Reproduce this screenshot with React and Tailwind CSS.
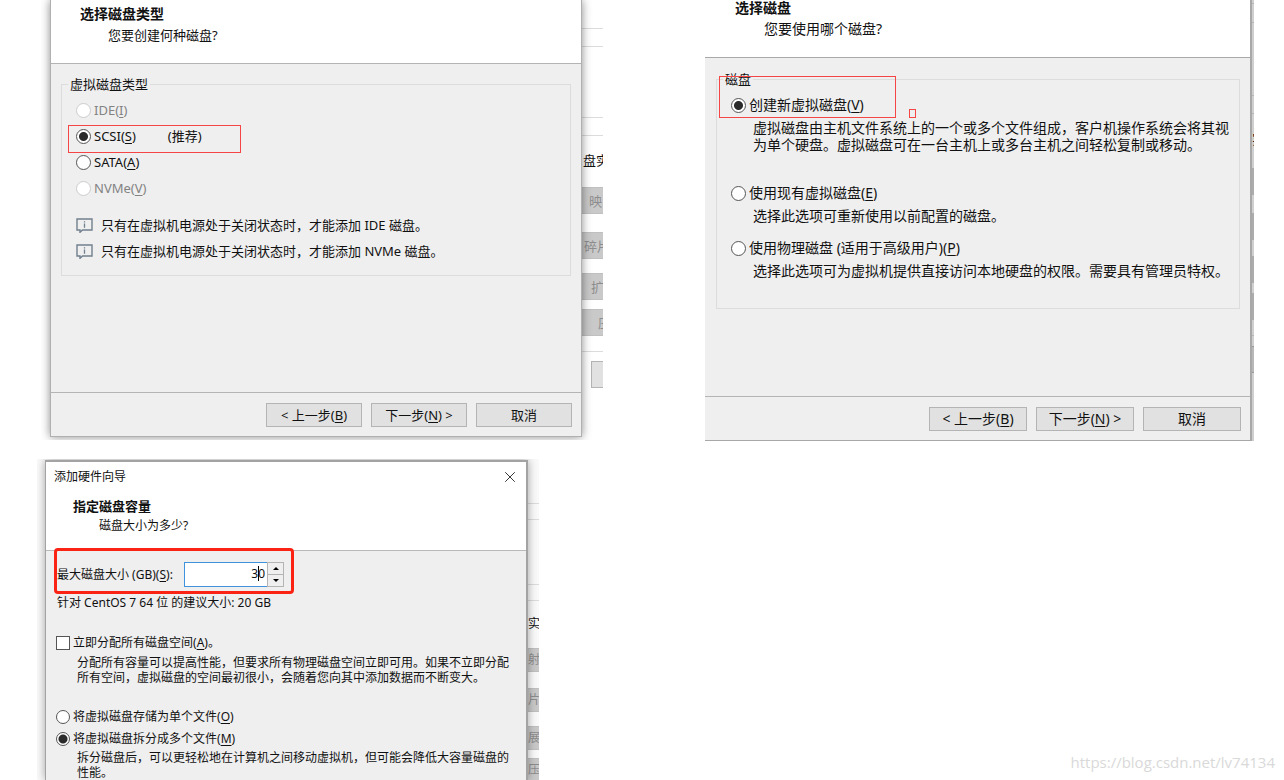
import React, { useState } from "react";
import { X } from "lucide-react";

const radioClass =
  "appearance-none shrink-0 rounded-full border border-[#555] bg-white checked:bg-[radial-gradient(circle,#2b2b2b_4px,#fff_5px)] disabled:border-[#ccc]";

const buttonClass = "h-6 border border-[#b4b4b4] bg-[#e1e1e1] whitespace-nowrap flex items-center justify-center";

const Key = ({ children }) => (
  <>
    (<u className="underline-offset-2">{children}</u>)
  </>
);

const Radio = ({ name, checked, onChange, disabled, size = "h-[26px] pl-[14px]", dot = "size-[15px]", children }) => (
  <label className={`flex items-center gap-[3px] whitespace-nowrap ${size} ${disabled ? "text-[#838383]" : ""}`}>
    <input type="radio" name={name} checked={checked} onChange={onChange} disabled={disabled} className={`${radioClass} ${dot}`} />
    <span>{children}</span>
  </label>
);

const InfoNote = ({ children }) => (
  <p className="flex items-center gap-2 h-[26px] pl-[14px] whitespace-nowrap">
    <svg viewBox="0 0 17 15" className="w-[17px] h-[15px] shrink-0" fill="none" stroke="#71808e">
      <path d="M1 1h15v11H6.500L4 14.300V12H1z" strokeWidth="1.400" />
      <path d="M8.500 3.200v1.400M8.500 5.600v4.200" strokeWidth="1.300" />
    </svg>
    <span>{children}</span>
  </p>
);

const WizardFooter = ({ width }) => (
  <footer className="flex justify-end gap-[9px] border-t border-[#b4b4b4] pt-[10px] pb-[9px] pr-[9px]">
    <button type="button" className={`${buttonClass} ${width}`}>
      <span>
        &lt; 上一步<Key>B</Key>
      </span>
    </button>
    <button type="button" className={`${buttonClass} ${width}`}>
      <span>
        下一步<Key>N</Key> &gt;
      </span>
    </button>
    <button type="button" className={`${buttonClass} ${width}`}>
      取消
    </button>
  </footer>
);

// The part of the settings window that shows behind a dialog
const Behind = ({ items, className }) => (
  <div aria-hidden="true" className={`shrink-0 overflow-hidden flex flex-col whitespace-nowrap ${className}`}>
    {items.map((item, i) => (
      <div key={i} className={`shrink-0 ${item.style}`}>
        {item.text}
      </div>
    ))}
  </div>
);

const line = "h-px bg-[#dcdcdc]";
const gray = "bg-[#c9c9c9] border-y border-[#c0c0c0] text-[#8d8d8d] flex items-center";

const behindType = [
  { style: `mt-[28px] ${line}` },
  { style: `mt-[17px] ${line}` },
  { style: `mt-[70px] ${line}` },
  { style: `mt-[17px] ${line}` },
  { style: "mt-[14px] h-5 leading-5 pl-px", text: "盘实" },
  { style: `mt-[17px] h-[27px] pl-[7px] ${gray}`, text: "映" },
  { style: `mt-[18px] h-[27px] pl-[2px] ${gray}`, text: "碎片" },
  { style: `mt-[14px] h-[27px] pl-[9px] ${gray}`, text: "扩" },
  { style: `mt-[9px] h-[27px] pl-[16px] ${gray}`, text: "压" },
  { style: `mt-[15px] ${line}` },
  { style: "mt-[9px] ml-[9px] h-[27px] border border-r-0 border-[#b4b4b4] bg-[#e1e1e1]" },
];

const behindDisk = [
  { style: "mt-[3px] h-px bg-[#b5b5b5]" },
  { style: "mt-[18px] h-px bg-[#b5b5b5]" },
  { style: "mt-[72px] h-px bg-[#b5b5b5]" },
  { style: "mt-[17px] h-px bg-[#b5b5b5]" },
  { style: "mt-[15px] h-5 leading-5", text: "实" },
  { style: "mt-[19px] h-[27px] bg-[#acacac]" },
  { style: "mt-[18px] h-[27px] bg-[#acacac]" },
  { style: "mt-[16px] h-[27px] bg-[#acacac]" },
  { style: "mt-[10px] h-[27px] bg-[#acacac]" },
  { style: "mt-[15px] h-px bg-[#b5b5b5]" },
  { style: "mt-[10px] h-[27px] bg-[#b8b8b8] border-y border-[#999]" },
];

const behindSize = [
  { style: `mt-[43px] ${line}` },
  { style: `mt-[15px] ${line}` },
  { style: `mt-[64px] ${line}` },
  { style: `mt-[15px] ${line}` },
  { style: "mt-[15px] h-4 leading-4", text: "实" },
  { style: `mt-[16px] h-[24px] ${gray}`, text: "射" },
  { style: `mt-[16px] h-[24px] ${gray}`, text: "片" },
  { style: `mt-[14px] h-[24px] ${gray}`, text: "展" },
  { style: `mt-[8px] h-[24px] ${gray}`, text: "压" },
];

const DiskTypeDialog = () => {
  const [type, setType] = useState("scsi");

  return (
    <div className="flex overflow-hidden h-[440px] pl-[9px] text-[13px] leading-5">
      <section className="relative z-10 flex-1 min-w-0 h-[437px] flex flex-col border border-t-0 border-[#b0b0b0] bg-[#efefef] shadow-[0_0_9px_rgba(0,0,0,0.45)]">
        <header className="h-16 shrink-0 bg-white border-b border-[#b4b4b4] pl-[29px] pt-[3px]">
          <h2 className="text-[14px] leading-[22px] font-bold">选择磁盘类型</h2>
          <p className="pl-[28px] leading-5">您要创建何种磁盘?</p>
        </header>
        <div className="flex-1 px-[10px] pt-[10px]">
          <fieldset className="border border-[#dcdcdc] pb-[11px]">
            <legend className="ml-[6px] px-[2px]">虚拟磁盘类型</legend>
            <div className="pt-[3px]">
              <Radio name="type" checked={type === "ide"} onChange={() => setType("ide")} disabled>
                IDE<Key>I</Key>
              </Radio>
              <div className="relative">
                <Radio name="type" checked={type === "scsi"} onChange={() => setType("scsi")}>
                  SCSI<Key>S</Key>
                  <span className="ml-8">(推荐)</span>
                </Radio>
                <div className="absolute left-[6px] top-[2px] w-[173px] h-[28px] border border-[#f54545] pointer-events-none"></div>
              </div>
              <Radio name="type" checked={type === "sata"} onChange={() => setType("sata")}>
                SATA<Key>A</Key>
              </Radio>
              <Radio name="type" checked={type === "nvme"} onChange={() => setType("nvme")} disabled>
                NVMe<Key>V</Key>
              </Radio>
            </div>
            <div className="mt-[11px]">
              <InfoNote>只有在虚拟机电源处于关闭状态时，才能添加 IDE 磁盘。</InfoNote>
              <InfoNote>只有在虚拟机电源处于关闭状态时，才能添加 NVMe 磁盘。</InfoNote>
            </div>
          </fieldset>
        </div>
        <WizardFooter width="w-24" />
      </section>
      <Behind items={behindType} className="w-[21px]" />
    </div>
  );
};

const DiskDialog = () => {
  const [disk, setDisk] = useState("new");

  return (
    <div className="flex overflow-hidden h-[441px] text-[14px] leading-5">
      <section className="relative z-10 flex-1 min-w-0 flex flex-col border-r-2 border-b border-[#a8a8a8] bg-[#efefef]">
        <header className="h-[58px] shrink-0 bg-white border-b border-[#a8a8a8] pl-[30px]">
          <h2 className="leading-4 font-bold">选择磁盘</h2>
          <p className="pl-[29px] leading-[26px]">您要使用哪个磁盘?</p>
        </header>
        <div className="flex-1 pl-[11px] pr-[10px] pt-[11px]">
          <fieldset className="border border-[#dcdcdc] pb-[29px]">
            <legend className="ml-[6px] px-[2px] text-[13px]">磁盘</legend>
            <div className="relative pt-[3px]">
              <Radio name="disk" checked={disk === "new"} onChange={() => setDisk("new")}>
                创建新虚拟磁盘<Key>V</Key>
              </Radio>
              <div className="absolute left-[2px] -top-[13px] w-[177px] h-[42px] border border-[#f54545] pointer-events-none"></div>
              <div className="absolute left-[192px] top-[20px] w-[7px] h-[9px] border border-[#f54545] pointer-events-none"></div>
            </div>
            <p className="mt-px pl-[36px] leading-[17px] whitespace-nowrap">
              虚拟磁盘由主机文件系统上的一个或多个文件组成，客户机操作系统会将其视
              <br />
              为单个硬盘。虚拟磁盘可在一台主机上或多台主机之间轻松复制或移动。
            </p>
            <div className="mt-[27px]">
              <Radio name="disk" checked={disk === "existing"} onChange={() => setDisk("existing")}>
                使用现有虚拟磁盘<Key>E</Key>
              </Radio>
            </div>
            <p className="mt-px pl-[36px] leading-[17px] whitespace-nowrap">选择此选项可重新使用以前配置的磁盘。</p>
            <div className="mt-[11px]">
              <Radio name="disk" checked={disk === "physical"} onChange={() => setDisk("physical")}>
                使用物理磁盘 (适用于高级用户)<Key>P</Key>
              </Radio>
            </div>
            <p className="mt-px pl-[36px] leading-[17px] whitespace-nowrap">
              选择此选项可为虚拟机提供直接访问本地硬盘的权限。需要具有管理员特权。
            </p>
          </fieldset>
        </div>
        <WizardFooter width="w-[98px]" />
      </section>
      <Behind items={behindDisk} className="w-[2px] bg-[#cfcfcf]" />
    </div>
  );
};

const DiskSizeDialog = () => {
  const [size, setSize] = useState(30);
  const [allocate, setAllocate] = useState(false);
  const [store, setStore] = useState("split");

  return (
    <div className="flex flex-col overflow-hidden text-[12px] leading-4 bg-[#fafafa]">
      <div aria-hidden="true" className="h-[2px] shrink-0 overflow-hidden flex items-end pl-[54px] gap-[154px]">
        <span>自动检测</span>
        <span>系统可用空间: 7.98 GB</span>
      </div>
      <div className="flex flex-1 min-h-0 -mt-px pl-[8px]">
        <section className="relative z-10 flex-1 min-w-0 flex flex-col border-2 border-l border-b-0 border-[#a3a3a3] bg-[#efefef] shadow-[0_0_9px_rgba(0,0,0,0.35)]">
          <header className="shrink-0 h-[89px] bg-white border-b border-[#b9b9b9]">
            <div className="flex items-center justify-between h-[30px] pl-[8px] pr-[7px]">
              <span>添加硬件向导</span>
              <button type="button" aria-label="关闭">
                <X size={18} strokeWidth={1.3} color="#333" />
              </button>
            </div>
            <h2 className="pl-[27px] text-[13px] leading-7 font-bold">指定磁盘容量</h2>
            <p className="pl-[53px] -mt-[2px]">磁盘大小为多少?</p>
          </header>
          <div className="relative flex items-center h-[46px] pl-[11px] pt-[5px]">
            <label htmlFor="size" className="whitespace-nowrap w-[127px]">
              最大磁盘大小 (GB)<Key>S</Key>:
            </label>
            <div className="relative flex h-[25px]">
              <input
                id="size"
                type="text"
                value={size}
                onChange={(e) => setSize(Number(e.target.value) || 0)}
                className="w-[83px] border border-r-0 border-[#3f93dc] bg-white text-right pr-[2px] pb-[2px] outline-none"
              />
              <span className="absolute left-[74px] top-[4px] w-px h-[15px] bg-black"></span>
              <div className="flex flex-col w-[17px] border border-[#b4b4b4]">
                <button type="button" aria-label="增加" onClick={() => setSize(size + 1)} className="flex-1 flex items-center justify-center border-b border-[#b4b4b4]">
                  <svg viewBox="0 0 6 3" className="w-[6px] h-[3px]"><path d="M0 3h6L3 0z" /></svg>
                </button>
                <button type="button" aria-label="减少" onClick={() => setSize(size - 1)} className="flex-1 flex items-center justify-center">
                  <svg viewBox="0 0 6 3" className="w-[6px] h-[3px]"><path d="M0 0h6L3 3z" /></svg>
                </button>
              </div>
            </div>
            <div className="absolute left-[8px] -top-[3px] w-[240px] h-[46px] border-3 border-[#fb2314] rounded-[4px] pointer-events-none"></div>
          </div>
          <p className="pl-[11px] pt-px">针对 CentOS 7 64 位 的建议大小: 20 GB</p>
          <label className="flex items-center gap-[3px] h-[22px] mt-[22px] pl-[10px] whitespace-nowrap">
            <input
              type="checkbox"
              checked={allocate}
              onChange={() => setAllocate(!allocate)}
              className="appearance-none size-[14px] border border-[#555] bg-white checked:bg-[#555]"
            />
            <span>
              立即分配所有磁盘空间<Key>A</Key>。
            </span>
          </label>
          <p className="pl-[31px] mt-[2px] leading-[15px] whitespace-nowrap">
            分配所有容量可以提高性能，但要求所有物理磁盘空间立即可用。如果不立即分配
            <br />
            所有空间，虚拟磁盘的空间最初很小，会随着您向其中添加数据而不断变大。
          </p>
          <div className="mt-[21px]">
            <Radio name="store" size="h-[22px] pl-[10px]" dot="size-[14px]" checked={store === "single"} onChange={() => setStore("single")}>
              将虚拟磁盘存储为单个文件<Key>O</Key>
            </Radio>
            <Radio name="store" size="h-[22px] pl-[10px]" dot="size-[14px]" checked={store === "split"} onChange={() => setStore("split")}>
              将虚拟磁盘拆分成多个文件<Key>M</Key>
            </Radio>
          </div>
          <p className="pl-[31px] leading-[15px] whitespace-nowrap">
            拆分磁盘后，可以更轻松地在计算机之间移动虚拟机，但可能会降低大容量磁盘的
            <br />
            性能。
          </p>
        </section>
        <Behind items={behindSize} className="w-[11px]" />
      </div>
    </div>
  );
};

const App = () => {
  return (
    <main className="h-screen overflow-hidden flex flex-col bg-white text-[#111] font-['Noto_Sans','Noto_Sans_CJK_SC',sans-serif]">
      <div className="grid grid-cols-[562fr_549fr] gap-x-[102px] pl-[41px] pr-[30px] items-start">
        <DiskTypeDialog />
        <DiskDialog />
      </div>
      <div className="flex-1 min-h-0 mt-[18px] pl-[37px] pr-[9px] grid grid-cols-[502fr_736fr] grid-rows-1">
        <DiskSizeDialog />
        <div className="flex items-end justify-end pb-[6px]">
          <a href="https://blog.csdn.net/lv74134" className="text-[15px] leading-6 text-[#d9d9d9] font-['Open_Sans',sans-serif]">
            https://blog.csdn.net/lv74134
          </a>
        </div>
      </div>
    </main>
  );
};

export default App;
